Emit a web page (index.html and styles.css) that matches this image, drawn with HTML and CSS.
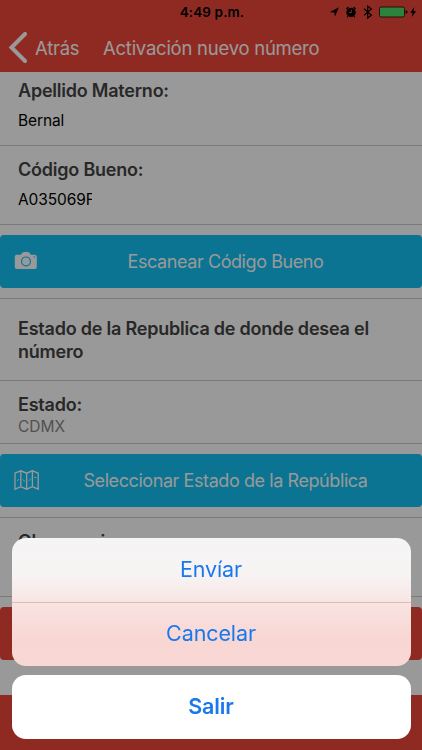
FILE: index.html
```
<!DOCTYPE html>
<html lang="es">
<head>
    <meta charset="UTF-8">
    <meta name="viewport" content="width=device-width, initial-scale=1.0">
    <title>Activación nuevo número</title>
    <link rel="stylesheet" href="styles.css">
</head>
<body>
    <header class="header">
        <div class="status-bar">
            <span class="time">4:49 p.m.</span>
            <svg class="status-icons" width="90" height="16" viewBox="0 0 90 16">
                <path d="M-.5 8.2 9 3.2 4.8 12.8 4.4 8.6z"/>
                <circle cx="21" cy="8.4" r="4.7"/>
                <path d="M16.4 5 18.4 3M23.6 3 25.6 5M18 12 17.2 13.2M24 12 24.8 13.2" fill="none" stroke="#000" stroke-width="1.1"/>
                <path d="M21.3 5.8V8.6H19" fill="none" stroke="#ef473a" stroke-width="1"/>
                <path d="M34 4.8 41.4 11.2 37.7 14V2.2L41.4 5 34 11.4" fill="none" stroke="#000" stroke-width="1.2"/>
                <rect x="49.5" y="3" width="25" height="10" rx="1.5" fill="#4cd964" stroke="#4a1210"/>
                <path d="M75.6 6.2Q77.6 6.6 77.6 8T75.6 9.8z"/>
                <path d="M84.2 3 80.2 8.8H82.6L81.6 13 86.2 7.2H83.6z"/>
            </svg>
        </div>
        <nav class="nav-bar">
            <svg class="back-icon" width="20" height="32" viewBox="0 0 20 32">
                <path d="M17 2 3.5 15.5 17 29" fill="none" stroke="#fff" stroke-width="4" stroke-linecap="round"/>
            </svg>
            <span class="back-text">Atrás</span>
            <h1 class="title">Activación nuevo número</h1>
        </nav>
    </header>

    <main class="content">
        <div class="item field">
            <h2>Apellido Materno:</h2>
            <p class="value">Bernal</p>
        </div>
        <div class="item field code">
            <h2>Código Bueno:</h2>
            <p class="value clipped">A035069F</p>
        </div>
        <div class="item button-row">
            <button class="button">
                <svg class="icon" width="26" height="22" viewBox="0 0 26 22">
                    <path fill="#fff" d="M3.8 3.8H6.6L8.6 1.6Q9.2 1 10 1H13.8Q14.6 1 15.2 1.6L17 3.8H20.6Q22.8 3.8 22.8 5.8V16.2Q22.8 18 20.8 18H2.8Q.8 18 .8 16.2V5.8Q.8 3.8 2.8 3.8z"/>
                    <circle cx="12" cy="10.4" r="4.4" fill="none" stroke="#11c1f3" stroke-width="1.2"/>
                    <circle cx="20.3" cy="6" r=".7" fill="#11c1f3"/>
                </svg>
                <span>Escanear Código Bueno</span>
            </button>
        </div>
        <div class="item heading">
            <h2>Estado de la Republica de donde desea el número</h2>
        </div>
        <div class="item state">
            <h2>Estado:</h2>
            <p>CDMX</p>
        </div>
        <div class="item button-row">
            <button class="button">
                <svg class="icon" width="26" height="22" viewBox="0 0 26 22">
                    <g fill="none" stroke="#fff" stroke-width="1.3">
                        <path d="M1 3.2 6.8 .8 12.6 3.2 18.4 .8 24.2 3.2V19.2L18.4 16.6 12.6 19.2 6.8 16.6 1 19.2zM6.8 .8V16.6M12.6 3.2V19.2M18.4 .8V16.6"/>
                        <path d="M3 11 5 9M8.5 9.5 11 11.5M14.5 11 17 8.5M20 7.5H22.5" stroke-width=".8"/>
                    </g>
                </svg>
                <span>Seleccionar Estado de la República</span>
            </button>
        </div>
        <div class="item notes">
            <h2>Observaciones:</h2>
        </div>
        <div class="send-row">
            <button class="button button-red"></button>
        </div>
    </main>
    <footer class="footer"></footer>

    <div class="backdrop">
        <div class="sheet">
            <button>Envíar</button>
            <button>Cancelar</button>
        </div>
        <div class="sheet sheet-cancel">
            <button>Salir</button>
        </div>
    </div>
</body>
</html>
```
FILE: styles.css
```
:root {
    --red: #ef473a;
    --blue: #11c1f3;
    --border: #ccc;
    --text: #444;
    --ios-blue: #1a78ee;
}

* {
    box-sizing: border-box;
}

body {
    margin: 0;
    height: 750px;
    display: flex;
    flex-direction: column;
    overflow: hidden;
    background-color: #fff;
    color: var(--text);
    font-family: Inter, 'Liberation Sans', sans-serif;
}

h1, h2, p {
    margin: 0;
}

button {
    border: none;
    font-family: inherit;
    cursor: pointer;
}

.header {
    height: 72px;
    flex: none;
    background-color: var(--red);
}

.status-bar {
    height: 24px;
    display: grid;
    grid-template-columns: 1fr auto 1fr;
    align-items: center;
}

.time {
    grid-column: 2;
    padding-left: 2px;
    color: #000;
    font-size: 13.5px;
    font-weight: 600;
    letter-spacing: 0.1px;
}

.status-icons {
    justify-self: end;
    margin-right: 2px;
}

.nav-bar {
    height: 48px;
    display: flex;
    align-items: center;
    padding-left: 8px;
    color: #fff;
    font-size: 18.5px;
    letter-spacing: -0.25px;
}

.back-text {
    width: 68px;
    margin-left: 7px;
}

.title {
    font-size: 18.5px;
    font-weight: 400;
}

.content {
    flex: 1;
}

.item {
    border-bottom: 1px solid var(--border);
}

.item h2 {
    font-size: 18px;
    font-weight: 600;
    line-height: 23px;
    letter-spacing: -0.22px;
}

.field {
    height: 74px;
    padding: 7px 18px 0;
}

.field.code {
    height: 79px;
    padding-top: 12px;
}

.value {
    margin-top: 7px;
    color: #000;
    font-size: 15.5px;
    line-height: 23px;
    letter-spacing: -0.1px;
}

.clipped {
    width: 74px;
    overflow: hidden;
}

.button-row {
    height: 74px;
    padding-top: 10px;
}

.button {
    width: 100%;
    height: 53px;
    display: flex;
    align-items: center;
    padding: 0 11px 0 14px;
    border-radius: 4px;
    background-color: var(--blue);
    color: #fff;
    font-size: 18px;
    letter-spacing: -0.42px;
}

.button span {
    flex: 1;
    text-align: center;
}

.button-red {
    background-color: var(--red);
}

.heading {
    height: 82px;
    padding: 18px 40px 0 18px;
}

.state {
    height: 63px;
    padding: 12px 18px 0;
}

.state p {
    color: #888;
    font-size: 15.5px;
    line-height: 22px;
}

.notes {
    height: 79px;
    padding: 12px 18px 0;
}

.send-row {
    padding-top: 10px;
}

.footer {
    height: 55px;
    flex: none;
    background-color: var(--red);
}

/* action sheet */
.backdrop {
    position: fixed;
    inset: 0;
    display: flex;
    flex-direction: column;
    justify-content: flex-end;
    gap: 9px;
    padding: 0 11.5px 11.5px;
    background-color: rgba(0, 0, 0, 0.4);
}

.sheet {
    border-radius: 14px;
    overflow: hidden;
    background: linear-gradient(#f5f5f5, #f7f3f3 30%, #f8e2e0 54%, #f8d6d3 80%, #f8d8d5);
}

.sheet button {
    display: block;
    width: 100%;
    height: 64px;
    padding: 0 0 1px;
    background: none;
    color: var(--ios-blue);
    font-size: 21.5px;
    letter-spacing: -0.1px;
}

.sheet button + button {
    padding-bottom: 2px;
    border-top: 1px solid #e0b9b6;
}

.sheet-cancel {
    background: #fff;
}

.sheet-cancel button {
    font-weight: 600;
}
```
